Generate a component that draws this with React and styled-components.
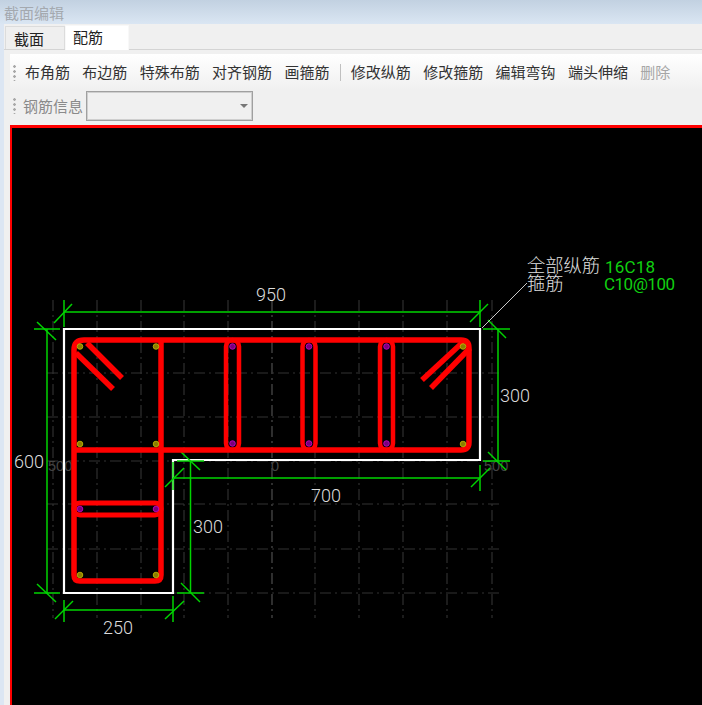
import React from 'react'
import styled, { createGlobalStyle } from 'styled-components'

const GlobalStyle = createGlobalStyle`
  html, body {
    margin: 0;
    padding: 0;
    height: 100%;
    overflow: hidden;
  }
  body {
    font-family: "Noto Sans CJK SC", "Liberation Sans", sans-serif;
    background: #dce6f3;
  }
`

const Window = styled.div`
  width: 702px;
  height: 705px;
  display: flex;
  flex-direction: column;
  overflow: hidden;
`

const TitleBar = styled.div`
  height: 24px;
  flex: none;
  padding-left: 4px;
  display: flex;
  align-items: center;
  font-size: 15px;
  color: #a4a9af;
  background: linear-gradient(#c2d1e1, #dae6f3);
`

const Body = styled.div`
  flex: 1;
  min-height: 0;
  margin-left: 4px;
  display: flex;
  flex-direction: column;
  background: #f0f0f0;
`

const TabStrip = styled.div`
  height: 26px;
  flex: none;
  display: flex;
  align-items: flex-end;
  padding-left: 1px;
  border-bottom: 1px solid #d4d4d4;
  box-sizing: border-box;
`

const Tab = styled.div`
  height: ${p => (p.$active ? 25 : 23)}px;
  width: ${p => (p.$active ? 64 : 60)}px;
  box-sizing: border-box;
  padding-left: ${p => (p.$active ? 7 : 8)}px;
  font-size: 15px;
  line-height: ${p => (p.$active ? 22 : 23)}px;
  color: #222;
  background: ${p => (p.$active ? '#fff' : '#efefef')};
  border: 1px solid ${p => (p.$active ? '#f8f8f8' : '#dcdcdc')};
  border-bottom: none;
  margin-bottom: ${p => (p.$active ? -1 : 0)}px;
  position: relative;
`

const Content = styled.div`
  flex: 1;
  min-height: 0;
  padding: 4px 0 0 6px;
  display: flex;
  flex-direction: column;
`

const Toolbar = styled.div`
  display: flex;
  align-items: center;
  flex: none;
  height: ${p => p.$height}px;
  padding-left: 3px;
  background: ${p => (p.$plain ? '#f0f0f0' : 'linear-gradient(#fff, #f0f0f0)')};
`

const Grip = styled.span`
  width: 3px;
  height: 17px;
  margin-right: 3px;
  flex: none;
  background: radial-gradient(circle, #a9a9a9 1.2px, transparent 1.5px) 0 0 / 3px 5px repeat-y;
`

const ToolButton = styled.span`
  padding: 0 6px;
  margin-right: 0.35px;
  font-size: 15px;
  line-height: 20px;
  white-space: nowrap;
  color: ${p => (p.$disabled ? '#a6a6a6' : '#333')};
`

const Separator = styled.span`
  width: 1px;
  height: 17px;
  margin: 0 4px;
  background: #c0c0c0;
`

const FieldLabel = styled.span`
  font-size: 15px;
  color: #8a8a8a;
  margin-left: 4px;
  white-space: nowrap;
`

const Combo = styled.div`
  width: 167px;
  height: 30px;
  margin-left: 3px;
  box-sizing: border-box;
  border: 1px solid #a0a0a0;
  outline: 1px solid #cfcfcf;
  outline-offset: -2px;
  background: #f0f0f0;
  display: flex;
  align-items: center;
  justify-content: flex-end;
  padding-right: 4px;
`

const ComboArrow = styled.span`
  width: 0;
  height: 0;
  border-left: 4px solid transparent;
  border-right: 4px solid transparent;
  border-top: 4px solid #777;
`

const Canvas = styled.div`
  flex: 1;
  min-height: 0;
  margin-top: 4px;
  border-top: 3px solid #f00;
  border-left: 2px solid #f00;
  background: #000;
  overflow: hidden;
`

const Drawing = styled.svg`
  display: block;
  width: 100%;
  height: 100%;
`

const DimText = styled.text`
  font-family: Roboto, "Liberation Sans", sans-serif;
  font-size: 18px;
  font-weight: 300;
  fill: #dcdcdc;
`

const AxisText = styled.text`
  font-family: "Liberation Sans", sans-serif;
  font-size: 14.5px;
  fill: #444;
`

const CodeText = styled.text`
  font-family: Roboto, "Liberation Sans", sans-serif;
  font-size: 17px;
  fill: #10d010;
`

const NoteText = styled.text`
  font-family: "Noto Sans CJK SC", sans-serif;
  font-size: 18.3px;
  font-weight: 300;
  fill: #e0e0e0;
`

const tools = ['布角筋', '布边筋', '特殊布筋', '对齐钢筋', '画箍筋']
const editTools = ['修改纵筋', '修改箍筋', '编辑弯钩', '端头伸缩']

const gridX = [53, 97, 141, 184, 228, 272, 315, 359, 403, 447, 492]
const gridY = [373, 417, 461, 504, 549, 593]

// green dimension lines: [x1, y1, x2, y2]
const dimLines = [
  [64, 312, 480, 312], [64, 300, 64, 327], [54, 323, 72, 304], [480, 300, 480, 327], [470, 322, 488, 304],
  [47, 329, 47, 593], [34, 329, 60, 329], [37, 322, 56, 340], [34, 593, 60, 593], [37, 584, 56, 602],
  [498, 329, 498, 461], [483, 329, 510, 329], [488, 320, 506, 338], [483, 461, 510, 461], [488, 452, 506, 470],
  [173, 478, 480, 478], [173, 462, 173, 490], [165, 487, 184, 468], [480, 465, 480, 491], [471, 487, 490, 468],
  [190.5, 461, 190.5, 593], [177, 461, 204, 461], [181, 452, 200, 470], [177, 593, 204, 593], [181, 583, 200, 602],
  [64, 610, 173, 610], [64, 600, 64, 622], [55, 619, 73, 601], [173, 596, 173, 622], [165, 619, 184, 601],
]

const stirrups = [
  'M74 575 V350 Q74 340 84 340 H461 Q469 340 469 348 V442 Q469 450 461 450 H74',
  'M76 353 L113 389',
  'M87 343 L122 378',
  'M74 575 Q74 581 80 581 H155 Q161 581 161 575 V340',
  'M463 342 L422 380',
  'M470 348 L431 388',
]

const ties = [232.5, 309, 386.5]

const yellowBars = [[80, 346.5], [156, 346.5], [80, 444], [156, 444], [463, 346.5], [463, 444], [80, 575], [156, 575]]
const purpleBars = [
  [80, 509], [156, 509],
  ...ties.flatMap(x => [[x, 346.5], [x, 443.5]]),
]

const App = () => {
  return (
    <Window>
      <GlobalStyle />
      <TitleBar>截面编辑</TitleBar>
      <Body>
        <TabStrip>
          <Tab>截面</Tab>
          <Tab $active>配筋</Tab>
        </TabStrip>
        <Content>
          <Toolbar $height={36}>
            <Grip />
            {tools.map(t => <ToolButton key={t}>{t}</ToolButton>)}
            <Separator />
            {editTools.map(t => <ToolButton key={t}>{t}</ToolButton>)}
            <ToolButton $disabled>删除</ToolButton>
          </Toolbar>
          <Toolbar $height={31} $plain>
            <Grip />
            <FieldLabel>钢筋信息</FieldLabel>
            <Combo><ComboArrow /></Combo>
          </Toolbar>
          <Canvas>
            <Drawing viewBox="12 128 690 577">
              <g strokeWidth="1.1" strokeDasharray="11 4 2 4" fill="none">
                {gridX.map(x => <line key={x} x1={x} y1="300" x2={x} y2="618" stroke={x === 272 ? '#555' : '#333'} />)}
                {gridY.map(y => <line key={y} x1="47" y1={y} x2="499" y2={y} stroke="#333" />)}
              </g>
              <AxisText x="48" y="471">500</AxisText>
              <AxisText x="271" y="471">0</AxisText>
              <AxisText x="484" y="471">500</AxisText>

              <path d="M64 329 H480 V460 H173 V593 H64 Z" fill="none" stroke="#fff" strokeWidth="2.2" />

              <g stroke="#00d400" strokeWidth="1.5">
                {dimLines.map(([x1, y1, x2, y2]) => (
                  <line key={`${x1}-${y1}-${x2}-${y2}`} x1={x1} y1={y1} x2={x2} y2={y2} />
                ))}
              </g>

              <g stroke="#f00" strokeWidth="5.5" fill="none">
                {stirrups.map(d => <path key={d} d={d} />)}
                <rect x="74" y="503" width="87" height="12" rx="6" strokeWidth="5" />
                {ties.map(x => (
                  <rect key={x} x={x - 6.5} y="340" width="13" height="110" rx="6.5" strokeWidth="4.5" />
                ))}
              </g>

              {yellowBars.map(([x, y]) => (
                <circle key={`${x}-${y}`} cx={x} cy={y} r="2.8" fill="#8c7d00" stroke="#c8c000" strokeWidth="0.8" />
              ))}
              {purpleBars.map(([x, y]) => (
                <circle key={`${x}-${y}`} cx={x} cy={y} r="2.8" fill="#7a007a" stroke="#d000d0" strokeWidth="0.8" />
              ))}

              <line x1="482" y1="328" x2="527" y2="283" stroke="#c8c8c8" strokeWidth="1" />

              <DimText x="256" y="301">950</DimText>
              <DimText x="14" y="468">600</DimText>
              <DimText x="500" y="402">300</DimText>
              <DimText x="311" y="502">700</DimText>
              <DimText x="193" y="533">300</DimText>
              <DimText x="103" y="634">250</DimText>

              <NoteText x="527" y="272">全部纵筋</NoteText>
              <NoteText x="527" y="290">箍筋</NoteText>
              <CodeText x="605" y="273" textLength="50">16C18</CodeText>
              <CodeText x="604" y="290" textLength="71">C10@100</CodeText>
            </Drawing>
          </Canvas>
        </Content>
      </Body>
    </Window>
  )
}

export default App
